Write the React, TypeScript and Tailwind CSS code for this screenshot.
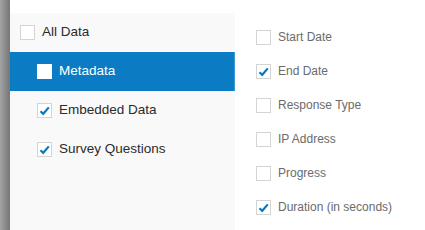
type Item = { label: string; checked: boolean; active?: boolean; indent?: boolean }

const leftItems: Item[] = [
  { label: 'All Data', checked: false },
  { label: 'Metadata', checked: false, active: true, indent: true },
  { label: 'Embedded Data', checked: true, indent: true },
  { label: 'Survey Questions', checked: true, indent: true },
]

const rightItems: Item[] = [
  { label: 'Start Date', checked: false },
  { label: 'End Date', checked: true },
  { label: 'Response Type', checked: false },
  { label: 'IP Address', checked: false },
  { label: 'Progress', checked: false },
  { label: 'Duration (in seconds)', checked: true },
]

function Box({ checked, active }: { checked: boolean; active?: boolean }) {
  return (
    <span
      className={`flex h-[15px] w-[15px] shrink-0 items-center justify-center border bg-white ${
        active ? 'border-white' : 'border-[#d4d4d4]'
      }`}
    >
      {checked && (
        <svg viewBox="0 0 13 13" className="h-[13px] w-[13px]">
          <path d="M2.5 7.2 L5.2 9.8 L10.8 3.4" fill="none" stroke="#0a78c2" strokeWidth="2.2" />
        </svg>
      )}
    </span>
  )
}

export default function App() {
  return (
    <div
      className="flex h-[230px] w-[425px] overflow-hidden bg-white"
      style={{ fontFamily: '"Liberation Sans", Arial, sans-serif' }}
    >
      {/* shadowed edge */}
      <div className="w-[10px] shrink-0 bg-gradient-to-r from-[#a3a3a3] to-[#767676]" />

      {/* categories */}
      <div className="flex w-[225px] shrink-0 flex-col">
        <div className="h-[13px] bg-white" />
        <div className="flex-1 bg-[#f9f9f9]">
          {leftItems.map((it) => (
            <div
              key={it.label}
              className={`flex h-[39px] items-center gap-[7px] ${it.indent ? 'pl-[27px]' : 'pl-[10px]'} ${
                it.active ? 'border-r border-[#3d9ad8] bg-[#0b7bc4] text-white' : 'text-[#2b2b2b]'
              }`}
            >
              <Box checked={it.checked} active={it.active} />
              <span className={`text-[13.5px] ${it.active ? 'font-medium' : ''}`}>{it.label}</span>
            </div>
          ))}
        </div>
      </div>

      {/* fields */}
      <div className="flex-1 pl-[21px] pt-[20px]">
        {rightItems.map((it) => (
          <div key={it.label} className="flex h-[34px] items-center gap-[7px] text-[#6b6b6b]">
            <Box checked={it.checked} />
            <span className="text-[12px]">{it.label}</span>
          </div>
        ))}
      </div>
    </div>
  )
}
